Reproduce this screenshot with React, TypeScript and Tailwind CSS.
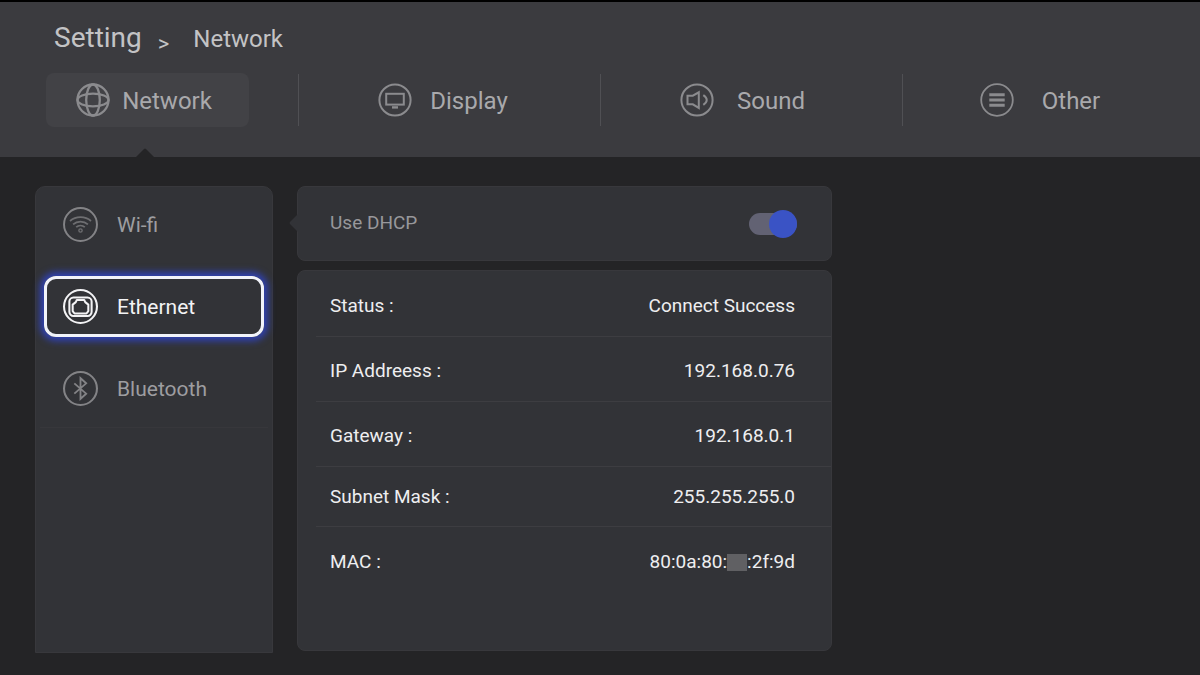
import React, { useState } from 'react'

const iconProps = {
  width: 34,
  height: 34,
  viewBox: '0 0 34 34',
  fill: 'none',
  stroke: 'currentColor',
  strokeWidth: 2,
  'aria-hidden': true,
}

const GlobeIcon = () => (
  <svg {...iconProps}>
    <circle cx="17" cy="17" r="15.5" strokeWidth="2.3" />
    <ellipse cx="17" cy="17" rx="6.8" ry="15.5" strokeWidth="2.3" />
    <ellipse cx="17" cy="17" rx="15.5" ry="6.3" strokeWidth="2.3" />
  </svg>
)

const DisplayIcon = () => (
  <svg {...iconProps}>
    <circle cx="17" cy="17" r="15.6" strokeWidth="2" />
    <rect x="8.2" y="10.8" width="17.6" height="10.8" strokeWidth="2" />
    <path d="M14 24.4h6" strokeWidth="2.4" />
  </svg>
)

const SoundIcon = () => (
  <svg {...iconProps}>
    <circle cx="17" cy="17" r="15.6" strokeWidth="2" />
    <path d="M7.5 12.7h5.3l6-3.4v15.6l-6-3.6H7.5z" strokeWidth="2" />
    <path d="M23.3 12.2c4.6 3 4.6 6.6 0 9.6" strokeWidth="2" />
  </svg>
)

const OtherIcon = () => (
  <svg {...iconProps}>
    <circle cx="17" cy="17" r="15.8" strokeWidth="1.8" />
    <path d="M9.3 11.8h15.4M9.3 17h15.4M9.3 22.2h15.4" strokeWidth="3" />
  </svg>
)

const WifiIcon = () => (
  <svg {...iconProps} width={35} height={35}>
    <circle cx="17" cy="17" r="16" strokeWidth="1.9" />
    <path
      d="M6.8 13.6c5.6-5 14.8-5 20.4 0M9.8 16.8c4-3.6 10.4-3.6 14.4 0M12.8 19.6c2.4-2.1 6-2.1 8.4 0"
      strokeWidth="1.7"
      opacity="0.75"
    />
    <circle cx="17" cy="22.8" r="1.6" strokeWidth="1.3" opacity="0.75" />
  </svg>
)

const EthernetIcon = () => (
  <svg {...iconProps} width={35} height={35}>
    <circle cx="17" cy="17" r="16" />
    <rect x="6.2" y="8.2" width="21.6" height="18" rx="4" strokeWidth="2" />
    <path
      d="M13.4 10.6h7.2l1 2.2 3 2.4v6.2l-1.8 2.4H11.200l-1.800-2.400v-6.200l3-2.400z"
      strokeWidth="2"
      strokeLinejoin="round"
    />
  </svg>
)

const BluetoothIcon = () => (
  <svg {...iconProps} width={35} height={35}>
    <circle cx="17" cy="17" r="16" strokeWidth="2" />
    <path d="M11 12l11.5 10-5.5 5V7l5.5 5L11 22" strokeWidth="1.8" />
  </svg>
)

const tabs = [
  { name: 'Network', icon: <GlobeIcon /> },
  { name: 'Display', icon: <DisplayIcon /> },
  { name: 'Sound', icon: <SoundIcon /> },
  { name: 'Other', icon: <OtherIcon /> },
]

const menu = [
  { name: 'Wi-fi', icon: <WifiIcon /> },
  { name: 'Ethernet', icon: <EthernetIcon /> },
  { name: 'Bluetooth', icon: <BluetoothIcon /> },
]

const rows = [
  { label: 'Status :', value: 'Connect Success', cell: 'h-[65px] pt-[6px]' },
  { label: 'IP Addreess :', value: '192.168.0.76', cell: 'h-[65px] pt-[6px]' },
  { label: 'Gateway :', value: '192.168.0.1', cell: 'h-[65px] pt-[6px]' },
  { label: 'Subnet Mask :', value: '255.255.255.0', cell: 'h-[60px] pt-[2px]' },
]

const App = () => {
  const [tab, setTab] = useState('Network')
  const [item, setItem] = useState('Ethernet')
  const [dhcp, setDhcp] = useState(true)

  return (
    <div className="min-h-screen bg-[#242426] font-['Roboto',sans-serif]">
      <header className="relative border-t-2 border-black bg-[#3b3b3f] pt-[18px] pb-[31px]">
        <nav className="flex h-9 items-baseline pl-[54px] text-2xl text-[#c3c3c5]" aria-label="Breadcrumb">
          <a href="#setting" className="text-[28px] leading-9">Setting</a>
          <span className="mx-4 translate-y-1 text-[22px]">&gt;</span>
          <h1 className="ml-2">{tab}</h1>
        </nav>
        <nav className="mt-[18px] grid grid-cols-[298fr_302fr_302fr_298fr] items-center">
          {tabs.map((t) => (
            <div key={t.name} className="flex h-[52px] items-center justify-center border-l border-[#505054] first:border-transparent first:pr-1">
              <button
                type="button"
                onClick={() => setTab(t.name)}
                className={
                  t.name === tab
                    ? 'flex h-[54px] w-[203px] shrink-0 items-center rounded-lg bg-[#424246] pl-[30px] text-2xl text-[#a9a9ac]'
                    : 'flex h-[54px] w-[203px] shrink-0 items-center rounded-lg pl-[30px] text-2xl text-[#a9a9ac]'
                }
              >
                <span className="text-[#8b8b8e]">{t.icon}</span>
                <span className="ml-3 w-[90px] pt-[2px] text-center">{t.name}</span>
              </button>
            </div>
          ))}
        </nav>
        <svg className="absolute bottom-0 left-[136px] text-[#242426]" width="18" height="9" viewBox="0 0 18 9" fill="currentColor" aria-hidden="true">
          <path d="M0 9L8 1Q9 0 10 1L18 9z" />
        </svg>
      </header>

      <main className="flex gap-6 px-[35px] pt-[29px] pb-[22px]">
        <aside className="w-[238px] shrink-0 rounded-t-[10px] border border-[#38383c] bg-[#323337] pt-[7px]">
          <ul className="flex flex-col gap-[21px] px-2">
            {menu.map((m) => (
              <li key={m.name}>
                <button
                  type="button"
                  onClick={() => setItem(m.name)}
                  className={
                    m.name === item
                      ? 'flex h-[61px] w-full items-center gap-[19px] rounded-xl border-3 border-[#f1f3fa] px-4 text-[21px] text-[#f3f3f5] shadow-[0_0_7px_4px_#3042b4]'
                      : 'flex h-[61px] w-full items-center gap-[19px] rounded-xl border-3 border-transparent px-4 text-[21px] text-[#9d9da0]'
                  }
                >
                  <span className={m.name === item ? 'text-[#f3f3f5]' : 'text-[#838386]'}>{m.icon}</span>
                  <span className="pt-[3px]">{m.name}</span>
                </button>
              </li>
            ))}
          </ul>
          <hr className="mx-1 mt-2 border-[#37373b]" />
        </aside>

        <section className="max-w-[535px] flex-1 pb-[2px] text-[19px]">
          <div className="relative flex h-[75px] items-center justify-between rounded-lg border border-[#38383c] bg-[#323337] pr-[34px] pl-8">
            <svg className="absolute top-[27px] -left-[9px] text-[#323337]" width="9" height="18" viewBox="0 0 9 18" fill="currentColor" aria-hidden="true">
              <path d="M9 0L1 8Q0 9 1 10L9 18z" />
            </svg>
            <label htmlFor="dhcp" className="text-[#98989b]">Use DHCP</label>
            <input
              id="dhcp"
              type="checkbox"
              checked={dhcp}
              onChange={(e) => setDhcp(e.target.checked)}
              className="flex h-[22px] w-12 appearance-none items-center rounded-full bg-[#626273] before:block before:size-7 before:shrink-0 before:rounded-full before:bg-[#8b8b92] checked:justify-end checked:before:bg-[#3a53c5]"
            />
          </div>

          <div className="mt-[9px] rounded-lg border border-[#38383c] bg-[#323337] pb-[59px] pl-[18px]">
            <table className="w-full text-[#eeeef0]">
              <tbody>
                {rows.map((r) => (
                  <tr key={r.label} className="border-b border-[#3d3d41]">
                    <th scope="row" className={`${r.cell} pl-[14px] text-left font-normal`}>{r.label}</th>
                    <td className={`${r.cell} pr-9 text-right`}>{r.value}</td>
                  </tr>
                ))}
                <tr>
                  <th scope="row" className="h-[65px] pt-[6px] pl-[14px] text-left font-normal">MAC :</th>
                  <td className="pt-[6px] pr-9 text-right">
                    80:0a:80:
                    <span className="inline-block h-[17px] w-5 bg-[#606063] align-middle" />
                    :2f:9d
                  </td>
                </tr>
              </tbody>
            </table>
          </div>
        </section>
      </main>
    </div>
  )
}

export default App
